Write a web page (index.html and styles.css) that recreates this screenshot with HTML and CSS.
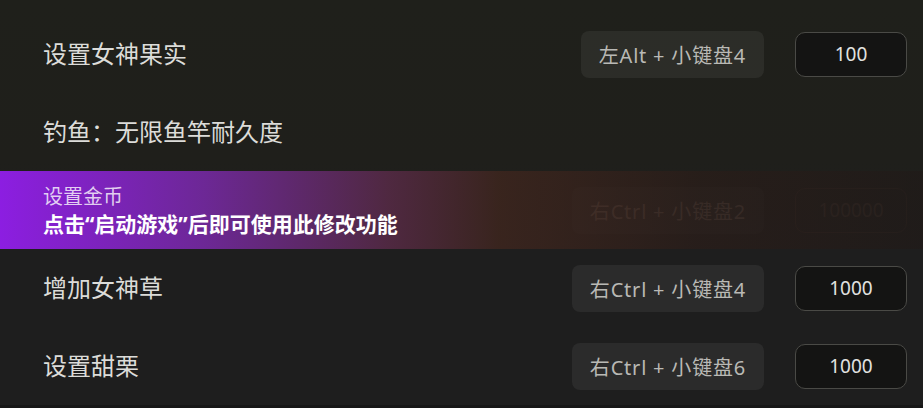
FILE: index.html
```html
<!DOCTYPE html>
<html lang="zh-CN">
<head>
    <meta charset="UTF-8">
    <meta name="viewport" content="width=device-width, initial-scale=1.0">
    <title>修改器</title>
    <link rel="stylesheet" href="styles.css">
</head>
<body>
    <div class="panel">
        <ul class="cheat-list">
            <!-- 上一项，已滚动出视野 -->
            <li class="cheat-row">
                <span class="cheat-name"></span>
                <span class="hotkey hotkey-stub"></span>
                <span class="value-stub"></span>
            </li>
            <li class="cheat-row">
                <span class="cheat-name">设置女神果实</span>
                <span class="hotkey">左Alt + 小键盘4</span>
                <input class="cheat-value" type="text" value="100">
            </li>
            <li class="cheat-row">
                <span class="cheat-name">钓鱼：无限鱼竿耐久度</span>
            </li>
            <!-- 未启动游戏时锁定 -->
            <li class="cheat-row locked">
                <span class="cheat-name">设置金币</span>
                <span class="hotkey">右Ctrl + 小键盘2</span>
                <input class="cheat-value" type="text" value="100000">
                <div class="lock-overlay">
                    <div class="lock-title">设置金币</div>
                    <div class="lock-tip">点击“启动游戏”后即可使用此修改功能</div>
                </div>
            </li>
            <li class="cheat-row">
                <span class="cheat-name">增加女神草</span>
                <span class="hotkey">右Ctrl + 小键盘4</span>
                <input class="cheat-value" type="text" value="1000">
            </li>
            <li class="cheat-row">
                <span class="cheat-name">设置甜栗</span>
                <span class="hotkey">右Ctrl + 小键盘6</span>
                <input class="cheat-value" type="text" value="1000">
            </li>
        </ul>
    </div>
</body>
</html>
```

FILE: styles.css
```css
html, body {
    height: 100%;
}

body {
    margin: 0;
    overflow: hidden;
    font-family: "Noto Sans", "Noto Sans CJK SC", sans-serif;
    background: #171717;
    color: #d9d9d6;
}

.panel {
    height: 405px;
    overflow: hidden;
    background: linear-gradient(180deg, #1f201b 0, #1f1f1b 160px, #1e1e1e 250px, #1e1e1e 100%);
}

.cheat-list {
    list-style: none;
    margin: -63px 0 0;
    padding: 0;
}

.cheat-row {
    position: relative;
    display: flex;
    align-items: center;
    height: 78px;
    padding: 0 16px 0 43px;
}

.cheat-name {
    flex: 1;
    margin-top: -3px;
    font-family: "Noto Sans CJK SC", sans-serif;
    font-size: 24px;
    color: #dcdcd9;
}

.hotkey {
    display: flex;
    align-items: center;
    height: 47px;
    padding: 0 18px;
    border-radius: 8px;
    background: rgba(255, 255, 255, 0.06);
    font-size: 20px;
    letter-spacing: 0.8px;
    color: #b9b9b5;
}

.hotkey-stub {
    box-sizing: border-box;
    width: 174px;
    margin-right: 5px;
}

.value-stub {
    width: 112px;
    margin-left: 31px;
}

.cheat-value {
    box-sizing: border-box;
    width: 112px;
    height: 45px;
    margin-left: 31px;
    border: 1px solid #4a4a46;
    border-radius: 10px;
    background: #141413;
    font-family: "Noto Sans", sans-serif;
    font-size: 19px;
    text-align: center;
    color: #e2e2e0;
    outline: none;
}

.locked .cheat-name {
    visibility: hidden;
}

.locked .hotkey {
    color: #5a4e47;
    background: rgba(255, 255, 255, 0.03);
}

.locked .cheat-value {
    color: #3a312c;
    border-color: #2f2723;
    background: transparent;
}

.lock-overlay {
    position: absolute;
    inset: 0;
    display: flex;
    flex-direction: column;
    justify-content: center;
    padding-left: 43px;
    background: linear-gradient(90deg, rgba(140, 30, 225, 1) 0, rgba(112, 40, 155, 0.96) 22%, rgba(86, 42, 70, 0.88) 42%, rgba(64, 38, 30, 0.78) 54%, rgba(42, 29, 25, 0.72) 76%, rgba(32, 26, 24, 0.7) 100%);
    font-family: "Noto Sans CJK SC", sans-serif;
    font-size: 20px;
    line-height: 28px;
}

.lock-title {
    color: rgba(255, 255, 255, 0.78);
}

.lock-tip {
    font-family: "Noto Sans", "Noto Sans CJK SC", sans-serif;
    font-size: 21px;
    font-weight: bold;
    color: #fff;
}
```
